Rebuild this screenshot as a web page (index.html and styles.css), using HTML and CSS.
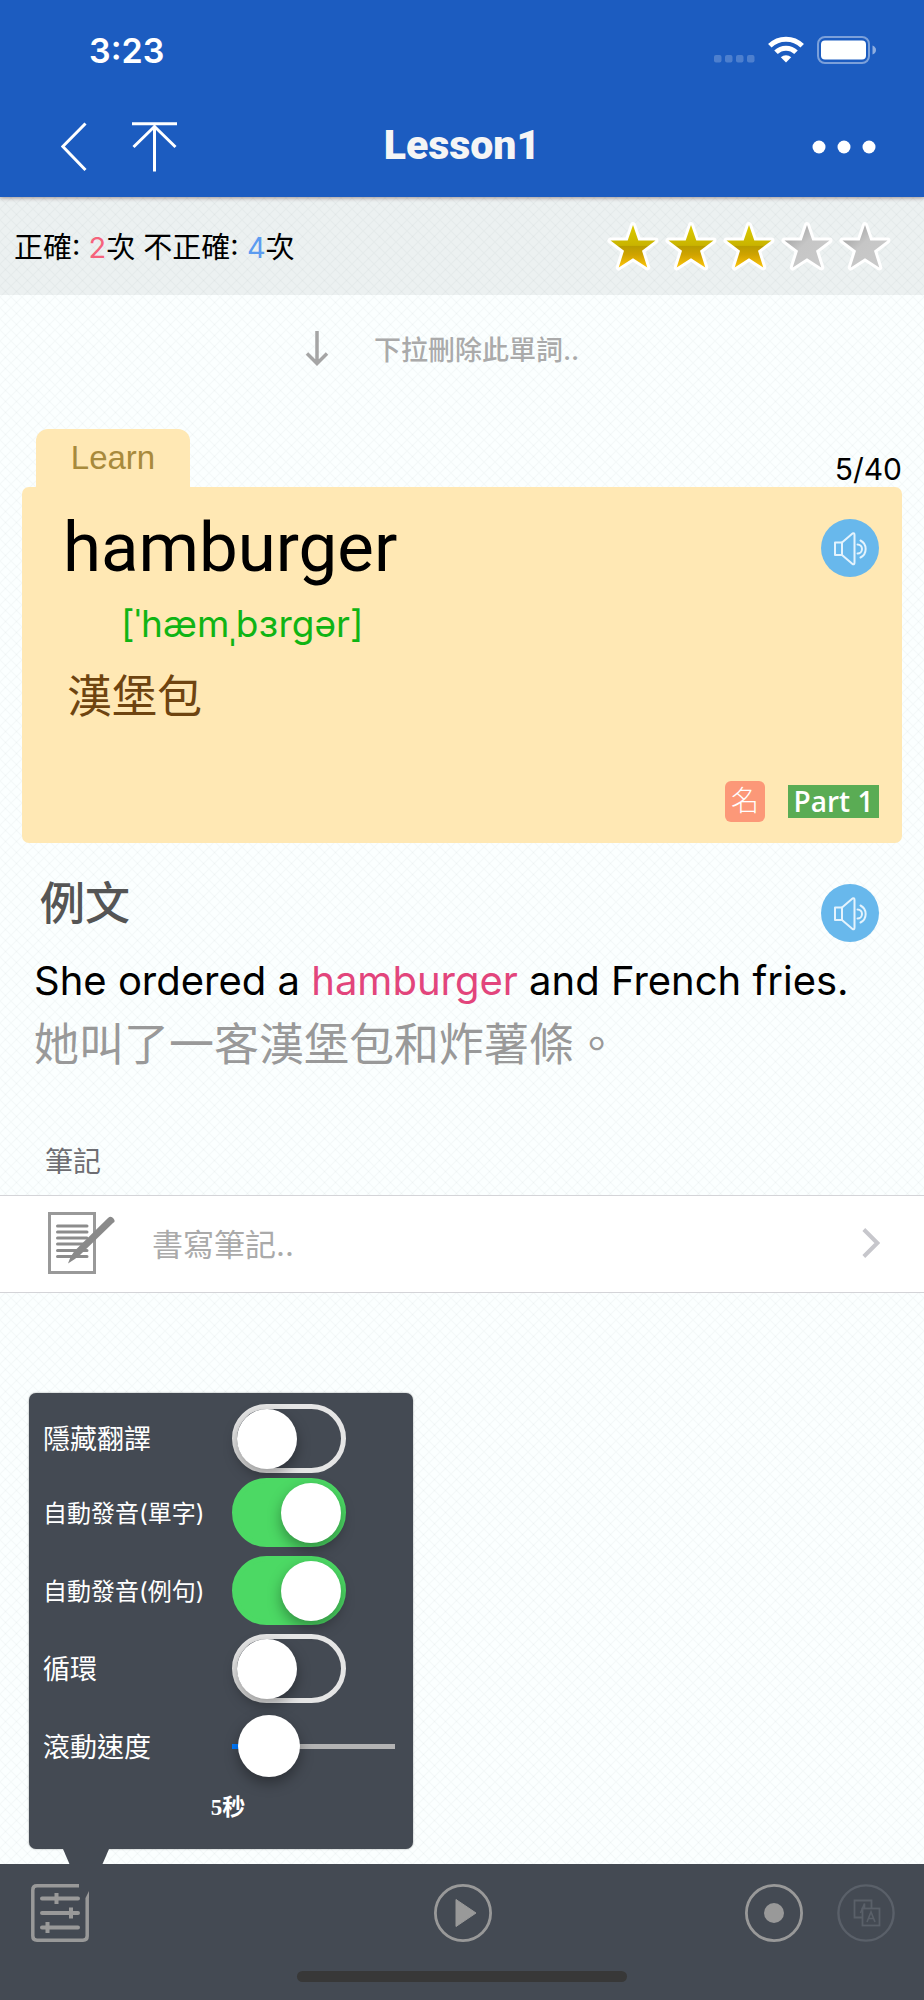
FILE: index.html
```html
<!DOCTYPE html>
<html lang="zh-Hant">
<head>
<meta charset="utf-8">
<meta name="viewport" content="width=device-width, initial-scale=1">
<title>Lesson1</title>
<link rel="stylesheet" href="styles.css">
</head>
<body>
<svg width="0" height="0" class="defs" aria-hidden="true">
  <defs>
    <linearGradient id="gold" x1="0" y1="0" x2="0" y2="1">
      <stop offset="0" stop-color="#dccb00"/>
      <stop offset="0.48" stop-color="#c9b400"/>
      <stop offset="0.5" stop-color="#b89c00"/>
      <stop offset="0.7" stop-color="#cfa300"/>
      <stop offset="1" stop-color="#fcc40a"/>
    </linearGradient>
    <linearGradient id="silver" x1="0" y1="0" x2="1" y2="1">
      <stop offset="0.2" stop-color="#a9a9a9"/>
      <stop offset="0.45" stop-color="#c6c6c6"/>
      <stop offset="1" stop-color="#cacaca"/>
    </linearGradient>
    <symbol id="star" viewBox="0 0 50 50">
      <path d="M25 4 30.300 19.500H47.500L34 29.800 39.300 46.500 25 37.300 10.700 46.500 16 29.800 2.500 19.500H19.700Z" stroke="#fff" stroke-width="6" stroke-linejoin="round" paint-order="stroke"/>
    </symbol>
    <symbol id="speaker" viewBox="0 0 58 58">
      <g fill="none" stroke="#e4f3fd" stroke-width="2" stroke-linejoin="round" stroke-linecap="round">
        <path d="M14 23.500h7v12.500h-7z"/>
        <path d="M21 23.500 31.500 14.500Q33.500 13.500 33.500 16V43.500Q33.500 46 31.500 45L21 36"/>
        <path d="M36.500 25.500a4.500 4.500 0 0 1 0 9M39.500 21.500a9.600 9.600 0 0 1 0 17"/>
      </g>
    </symbol>
  </defs>
</svg>

<header class="header">
  <div class="status">
    <span class="time">3:23</span>
    <span class="status-icons">
      <svg width="41" height="27" viewBox="0 0 41 27" aria-hidden="true"><g fill="#fff" fill-opacity=".22"><rect x="0" y="19" width="7.500" height="7.500" rx="2"/><rect x="11" y="19" width="7.500" height="7.500" rx="2"/><rect x="22" y="19" width="7.500" height="7.500" rx="2"/><rect x="33" y="19" width="7.500" height="7.500" rx="2"/></g></svg>
      <svg width="36" height="27" viewBox="0 0 36 27" aria-hidden="true"><g fill="none" stroke="#fff" stroke-width="5"><path d="M1.800 9.800a23 23 0 0 1 32.400 0"/><path d="M8 16.300a14.200 14.200 0 0 1 20 0"/></g><path d="M18 26.500 12.800 21.300a7.400 7.400 0 0 1 10.400 0Z" fill="#fff"/></svg>
      <svg width="60" height="28" viewBox="0 0 60 28" aria-hidden="true"><rect x="1" y="1" width="51" height="26" rx="7" fill="none" stroke="#fff" stroke-opacity=".42" stroke-width="2"/><rect x="4" y="4.500" width="45" height="19" rx="4" fill="#fff"/><path d="M55.500 9.500q3.500 1.500 3.500 4.500t-3.500 4.500z" fill="#fff" fill-opacity=".5"/></svg>
    </span>
  </div>
  <nav class="nav">
    <div class="nav-left">
      <button class="icon-btn" aria-label="Back"><svg width="26" height="50" viewBox="0 0 26 50"><path d="M24.500 1.500 1.800 24.500 24.500 48" fill="none" stroke="#fff" stroke-width="3"/></svg></button>
      <button class="icon-btn" aria-label="Top"><svg width="46" height="50" viewBox="0 0 46 50"><path d="M0 1.700H45M22.500 5V49.500M1.500 25 22.500 4.500 43.500 25" fill="none" stroke="#fff" stroke-width="3"/></svg></button>
    </div>
    <h1 class="title">Lesson1</h1>
    <button class="icon-btn nav-more" aria-label="More"><svg width="64" height="14" viewBox="0 0 64 14" fill="#fff"><circle cx="7" cy="7" r="6.500"/><circle cx="32" cy="7" r="6.500"/><circle cx="57" cy="7" r="6.500"/></svg></button>
  </nav>
</header>

<section class="stats">
  <p class="score">正確: <span class="right">2</span>次 不正確: <span class="wrong">4</span>次</p>
  <div class="stars" role="img" aria-label="3 / 5">
    <svg class="star on"><use href="#star"/></svg>
    <svg class="star on"><use href="#star"/></svg>
    <svg class="star on"><use href="#star"/></svg>
    <svg class="star"><use href="#star"/></svg>
    <svg class="star"><use href="#star"/></svg>
  </div>
</section>

<main class="main">
  <div class="hint">
    <svg width="24" height="36" viewBox="0 0 24 36" aria-hidden="true"><path d="M12 1V33M2 23.500 12 33.500 22 23.500" fill="none" stroke="#a5a5a5" stroke-width="3.500"/></svg>
    <span>下拉刪除此單詞..</span>
  </div>

  <div class="tab-row">
    <span class="tab">Learn</span>
    <span class="counter">5/40</span>
  </div>
  <article class="card">
    <div class="word-row">
      <h2 class="word">hamburger</h2>
      <button class="speak" aria-label="Play word"><svg width="58" height="58"><use href="#speaker"/></svg></button>
    </div>
    <p class="phonetic">[ˈhæmˌbɜrgər]</p>
    <p class="meaning">漢堡包</p>
    <div class="badges">
      <span class="badge-pos">名</span>
      <span class="badge-part">Part 1</span>
    </div>
  </article>

  <section class="example">
    <div class="example-head">
      <h2 class="example-title">例文</h2>
      <button class="speak" aria-label="Play sentence"><svg width="58" height="58"><use href="#speaker"/></svg></button>
    </div>
    <p class="sentence">She ordered a <span class="hit">hamburger</span> and French fries.</p>
    <p class="translation">她叫了一客漢堡包和炸薯條。</p>
  </section>

  <h3 class="note-title">筆記</h3>
  <button class="note">
    <svg width="68" height="62" viewBox="0 0 68 62" aria-hidden="true">
      <rect x="1.500" y="1.500" width="45" height="59" fill="none" stroke="#999" stroke-width="3"/>
      <path d="M9.500 14H39M9.500 20H39M9.500 26H39M9.500 32H39M9.500 38.500H39M9.500 44.500H39" stroke="#8c8c8c" stroke-width="3" stroke-linecap="round"/>
      <path d="M20 51.500Q23 42.500 28 37.500L60 6Q63 3.500 65.500 6.500T65 11L32 43Q27.500 47 20 51.500Z" fill="#8a8a8a"/>
    </svg>
    <span class="note-text">書寫筆記..</span>
    <svg width="18" height="30" viewBox="0 0 18 30" aria-hidden="true"><path d="M1.800 1.500 15.300 15 1.800 28.500" fill="none" stroke="#c7c7cc" stroke-width="4"/></svg>
  </button>
</main>

<footer class="toolbar">
  <form class="popover">
    <div class="option first"><label for="hide">隱藏翻譯</label><input class="switch" type="checkbox" role="switch" id="hide"></div>
    <div class="option small"><label for="autoword">自動發音(單字)</label><input class="switch" type="checkbox" role="switch" id="autoword" checked></div>
    <div class="option small"><label for="autosent">自動發音(例句)</label><input class="switch" type="checkbox" role="switch" id="autosent" checked></div>
    <div class="option"><label for="loop">循環</label><input class="switch" type="checkbox" role="switch" id="loop"></div>
    <div class="option"><label for="speed">滾動速度</label><input class="slider" type="range" id="speed" min="0" max="100" value="6"></div>
    <output class="seconds" for="speed">5秒</output>
  </form>
  <div class="tools">
    <button class="icon-btn tool" aria-label="Settings"><svg width="58" height="58" viewBox="0 0 58 58" fill="none" stroke="#999"><path d="M48 1.800H6Q1.800 1.800 1.800 6V52Q1.800 56.200 6 56.200H52Q56.200 56.200 56.200 52V14" stroke-width="3.500"/><path d="M54.500 14 58 7V14Z" fill="#999" stroke="none"/><path d="M11 14.500H47M11 29H47M11 43.500H47" stroke-width="4" stroke-linecap="round"/><path d="M25.500 9V20M40 23.500V34.500M16.500 38V49" stroke-width="4"/></svg></button>
    <button class="icon-btn tool" aria-label="Play"><svg width="58" height="58" viewBox="0 0 58 58"><circle cx="29" cy="29" r="27.600" fill="none" stroke="#999" stroke-width="2.800"/><path d="M22 15.500V42.500L42 29Z" fill="#999" stroke="#999" stroke-linejoin="round"/></svg></button>
    <div class="tools-right">
      <button class="icon-btn tool" aria-label="Record"><svg width="58" height="58" viewBox="0 0 58 58"><circle cx="29" cy="29" r="27.600" fill="none" stroke="#999" stroke-width="2.800"/><circle cx="29" cy="29" r="10" fill="#999"/></svg></button>
      <button class="icon-btn tool" aria-label="Translate" disabled><svg width="58" height="58" viewBox="0 0 58 58" fill="none" stroke="#5a6069"><circle cx="29" cy="29" r="27.600" stroke-width="2.400"/><path d="M25 33.500H17.500V16.500H34.500V24" stroke-width="1.800"/><rect x="25.500" y="24.500" width="17" height="17" stroke-width="1.800"/><path d="M30 38 34 28 38 38M31.500 34.500H36.500M23.500 29 27.500 19.500V24" stroke-width="1.600"/></svg></button>
    </div>
  </div>
  <div class="home"></div>
</footer>
</body>
</html>
```
FILE: styles.css
```css
* { box-sizing: border-box; margin: 0; padding: 0; }

body {
  min-height: 100vh;
  display: flex;
  flex-direction: column;
  font-family: Inter, "Noto Sans CJK TC", sans-serif;
  color: #000;
  background-color: #fbffff;
  background-image:
    linear-gradient(45deg, transparent 42%, rgba(90, 110, 120, .04) 50%, transparent 58%),
    linear-gradient(-45deg, transparent 42%, rgba(90, 110, 120, .04) 50%, transparent 58%);
  background-size: 11px 11px;
}

button {
  font: inherit;
  color: inherit;
  background: none;
  border: 0;
  cursor: pointer;
}

svg { display: block; }
.defs { position: absolute; }

/* Header */
.header {
  position: relative;
  color: #fff;
  background: #1c5cc0;
  box-shadow: 0 1px 4px rgba(60, 30, 30, .45);
}
.status {
  height: 100px;
  padding: 0 47px 0 89px;
  display: flex;
  align-items: center;
  justify-content: space-between;
}
.time { font-size: 34px; font-weight: 600; }
.status-icons { display: flex; gap: 13px; }
.nav {
  height: 97px;
  padding: 0 48px 4px;
  display: grid;
  grid-template-columns: 1fr auto 1fr;
  align-items: center;
}
.nav-left { display: flex; gap: 45px; padding-left: 13px; }
.nav-more { justify-self: end; }
.title {
  padding-bottom: 4px;
  font-family: Roboto, sans-serif;
  font-size: 41px;
  font-weight: 900;
  line-height: 80px;
  color: #f5f5f5;
}

/* Score bar */
.stats {
  height: 98px;
  padding: 0 34px 0 14px;
  display: flex;
  align-items: center;
  justify-content: space-between;
  background: rgba(40, 50, 50, .07);
}
.score { padding-bottom: 2px; font-size: 29px; }
.right { color: #f5637c; }
.wrong { color: #5c9cf0; }
.stars { display: flex; gap: 8px; }
.star { width: 50px; height: 50px; overflow: visible; fill: url(#silver); }
.star.on { fill: url(#gold); }
#star { overflow: visible; }

/* Pull hint */
.main { flex: 1; }
.hint {
  height: 106px;
  display: flex;
  align-items: center;
  gap: 45px;
  padding-left: 33%;
  font-size: 27px;
  font-weight: 500;
  color: #aaa;
}

/* Word card */
.tab-row {
  height: 86px;
  padding: 0 22px 0 36px;
  display: flex;
  align-items: flex-end;
  justify-content: space-between;
}
.tab {
  width: 154px;
  border-radius: 12px 12px 0 0;
  font-family: "Liberation Sans", sans-serif;
  font-size: 33px;
  line-height: 58px;
  text-align: center;
  color: #a88a3c;
  background: #ffe8b4;
}
.counter { font-size: 30px; line-height: 36px; }
.card {
  margin: 0 22px;
  padding: 21px 23px 21px 41px;
  border-radius: 7px;
  background: #ffe8b4;
}
.word-row {
  display: flex;
  align-items: center;
  justify-content: space-between;
}
.word {
  font-family: Roboto, sans-serif;
  font-size: 69px;
  font-weight: 400;
  line-height: 80px;
}
.speak {
  width: 58px;
  height: 58px;
  border-radius: 50%;
  background: #68b8ec;
}
.phonetic {
  padding-left: 58px;
  font-size: 37px;
  line-height: 72px;
  color: #10b414;
}
.meaning {
  padding: 2px 0 0 4px;
  font-size: 45px;
  line-height: 70px;
  color: #6e4410;
}
.badges {
  margin-top: 49px;
  display: flex;
  align-items: center;
  justify-content: flex-end;
  gap: 23px;
}
.badge-pos {
  width: 40px;
  border-radius: 6px;
  font-size: 28px;
  font-weight: 300;
  line-height: 41px;
  text-align: center;
  color: #fff;
  background: #fc9878;
}
.badge-part {
  width: 91px;
  font-family: "Open Sans", sans-serif;
  font-size: 28px;
  font-weight: 600;
  line-height: 33px;
  text-align: center;
  white-space: nowrap;
  color: #fff;
  background: #5aac54;
}

/* Example */
.example { padding: 41px 45px 0 34px; }
.example-head {
  padding-left: 6px;
  display: flex;
  justify-content: space-between;
}
.example-title {
  font-size: 45px;
  font-weight: 500;
  line-height: 40px;
  color: #555;
}
.sentence { margin-top: 11px; font-size: 40px; line-height: 56px; }
.hit { color: #e2457c; }
.translation {
  margin-top: 6px;
  font-size: 45px;
  line-height: 60px;
  color: #999;
}

/* Notes */
.note-title {
  padding: 67px 45px 13px;
  font-size: 28px;
  font-weight: 400;
  line-height: 40px;
  color: #6d6d72;
}
.note {
  width: 100%;
  height: 98px;
  padding: 0 44px 2px 48px;
  display: flex;
  align-items: center;
  gap: 36px;
  border: solid #d4d4d8;
  border-width: 1px 0;
  background: #fff;
}
.note-text {
  flex: 1;
  padding-bottom: 2px;
  font-size: 31px;
  text-align: left;
  color: #aaa;
}

/* Bottom toolbar */
.toolbar {
  position: relative;
  height: 136px;
  background: #444a53;
}
.tools {
  height: 98px;
  padding: 0 29px 0 31px;
  display: grid;
  grid-template-columns: 1fr auto 1fr;
  align-items: center;
}
.tool { justify-self: start; }
.tools-right { display: flex; gap: 34px; justify-self: end; }
.home {
  width: 330px;
  height: 11px;
  margin: 9px auto 0;
  border-radius: 6px;
  background: #383838;
}

/* Settings popover */
.popover {
  position: absolute;
  left: 29px;
  bottom: 100%;
  width: 384px;
  margin-bottom: 15px;
  padding: 10px 18px 22px 14px;
  border-radius: 7px;
  color: #fff;
  background: #444a53;
  box-shadow: 0 0 2px rgba(0, 0, 0, .4);
}
.popover::after {
  content: "";
  position: absolute;
  top: 100%;
  left: 34px;
  width: 46px;
  height: 16px;
  background: #444a53;
  clip-path: polygon(0 0, 100% 0, 85% 100%, 15% 100%);
}
.option {
  height: 78px;
  display: grid;
  grid-template-columns: 189px 1fr;
  align-items: center;
  font-size: 27px;
}
.option.first { height: 70px; }
.option.small { font-size: 24px; }
.option label { padding-bottom: 2px; }
.switch {
  appearance: none;
  width: 114px;
  height: 69px;
  padding: 0;
  border: 5px solid #e5e5e5;
  border-radius: 35px;
  cursor: pointer;
}
.switch::before {
  content: "";
  display: block;
  width: 60px;
  height: 60px;
  border-radius: 50%;
  background: #fff;
  box-shadow: 0 6px 14px rgba(0, 0, 0, .35);
}
.switch:checked { border-color: #4cd964; background: #4cd964; }
.switch:checked::before { margin-left: auto; }
.slider {
  appearance: none;
  width: 163px;
  height: 62px;
  cursor: pointer;
  background: linear-gradient(90deg, #007aff 20px, #b3b3b3 20px) center / 100% 5px no-repeat;
}
.slider::-webkit-slider-thumb {
  appearance: none;
  width: 62px;
  height: 62px;
  border-radius: 50%;
  background: #fff;
  box-shadow: 0 6px 14px rgba(0, 0, 0, .35);
}
.seconds {
  display: block;
  padding: 4px 0 0 18px;
  font-family: "Liberation Serif", "Noto Sans CJK TC", serif;
  font-size: 23px;
  font-weight: 700;
  line-height: 38px;
  text-align: center;
}
```
